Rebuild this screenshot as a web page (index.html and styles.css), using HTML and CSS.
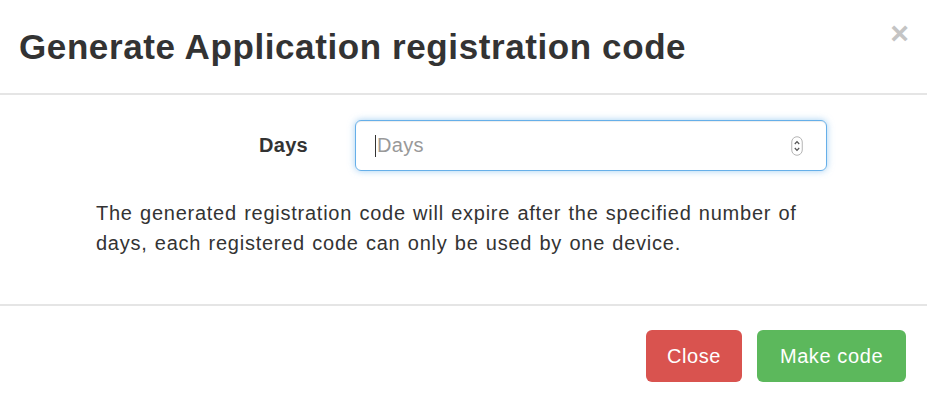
FILE: index.html
```html
<!DOCTYPE html>
<html lang="en">
<head>
  <meta charset="UTF-8" />
  <title>Generate Application registration code</title>
  <link rel="stylesheet" href="styles.css">
</head>
<body>

<div class="modal">
  <div class="modal-header">
    <h4 class="modal-title">Generate Application registration code</h4>
    <span class="close">&times;</span>
  </div>

  <div class="modal-body">
    <div class="form-row">
      <label class="form-label">Days</label>
      <div class="form-input">
        <span class="caret"></span>
        <span class="placeholder">Days</span>
        <svg class="spinner" width="12" height="20" viewBox="0 0 12 20">
          <rect x="0.75" y="0.75" width="10.5" height="18.5" rx="5.25" fill="#fff" stroke="#b5b5b5" stroke-width="1"/>
          <path d="M3.8 8 L6 5.6 L8.2 8" fill="none" stroke="#555" stroke-width="1.2"/>
          <path d="M3.8 12 L6 14.4 L8.2 12" fill="none" stroke="#555" stroke-width="1.2"/>
        </svg>
      </div>
    </div>
    <p class="help">The generated registration code will expire after the specified number of days, each registered code can only be used by one device.</p>
  </div>

  <div class="modal-footer">
    <button class="btn btn-danger">Close</button>
    <button class="btn btn-success">Make code</button>
  </div>
</div>

</body>
</html>
```

FILE: styles.css
```css
body { margin: 0; background: #fff; font-family: "Liberation Sans", Arial, sans-serif; color: #333; }
.modal { width: 927px; }
.modal-header { border-bottom: 2px solid #e5e5e5; display: flex; align-items: center; justify-content: space-between; padding: 0 20px 0 19px; box-sizing: border-box; height: 95px; }
.modal-title { margin: 0; font-size: 35px; font-weight: bold; letter-spacing: 0.6px; color: #333; }
.close { align-self: flex-start; margin-top: 17px; margin-right: -2px; font-size: 32px; font-weight: bold; color: #c4c4c4; line-height: 1; }
.modal-body { padding: 25px 0 0; height: 209px; box-sizing: border-box; }
.form-row { display: flex; align-items: center; }
.form-label { width: 308px; text-align: right; font-weight: bold; font-size: 20px; letter-spacing: 0.3px; }
.form-input { margin-left: 47px; width: 472px; height: 51px; box-sizing: border-box; border: 1px solid #66afe9; border-radius: 6px; box-shadow: inset 0 1px 1px rgba(0,0,0,.075), 0 0 7px rgba(102,175,233,.6); display: flex; align-items: center; padding: 0 23px 0 19px; }
.caret { width: 1px; height: 22px; background: #333; }
.placeholder { flex: 1; color: #999; font-size: 20px; letter-spacing: 0.3px; margin-left: 1px; }
.spinner { display: block; }
.help { margin: 27px 0 0 96px; width: 730px; font-size: 20px; letter-spacing: 0.75px; word-spacing: 1px; line-height: 30px; }
.modal-footer { border-top: 2px solid #e5e5e5; padding: 24px 21px 0 0; display: flex; justify-content: flex-end; gap: 15px; }
.btn { height: 52px; border: none; border-radius: 6px; color: #fff; font-family: "Liberation Sans", Arial, sans-serif; font-size: 20px; letter-spacing: 0.6px; padding: 0; cursor: pointer; }
.btn-danger { background: #d9534f; width: 96px; }
.btn-success { background: #5cb85c; width: 149px; }
```
